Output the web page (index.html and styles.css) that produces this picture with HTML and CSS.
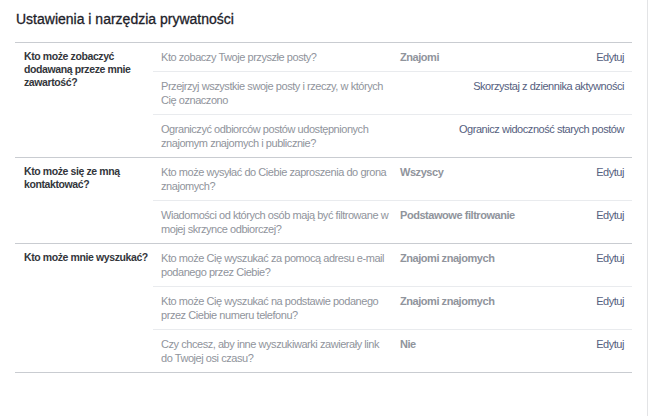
FILE: index.html
```html
<!DOCTYPE html>
<html lang="pl">
<head>
    <meta charset="UTF-8">
    <title>Ustawienia i narzędzia prywatności</title>
    <link rel="stylesheet" href="styles.css">
</head>
<body>
    <div class="panel">
        <h2 class="panel-title">Ustawienia i narzędzia prywatności</h2>

        <div class="section">
            <div class="section-label">Kto może zobaczyć dodawaną przeze mnie zawartość?</div>
            <div class="section-rows">
                <div class="row">
                    <div class="question">Kto zobaczy Twoje przyszłe posty?</div>
                    <div class="value">Znajomi</div>
                    <a class="action" href="#">Edytuj</a>
                </div>
                <div class="row">
                    <div class="question">Przejrzyj wszystkie swoje posty i rzeczy, w których Cię oznaczono</div>
                    <a class="action" href="#">Skorzystaj z dziennika aktywności</a>
                </div>
                <div class="row">
                    <div class="question">Ograniczyć odbiorców postów udostępnionych znajomym znajomych i publicznie?</div>
                    <a class="action" href="#">Ogranicz widoczność starych postów</a>
                </div>
            </div>
        </div>

        <div class="section">
            <div class="section-label">Kto może się ze mną kontaktować?</div>
            <div class="section-rows">
                <div class="row">
                    <div class="question">Kto może wysyłać do Ciebie zaproszenia do grona znajomych?</div>
                    <div class="value">Wszyscy</div>
                    <a class="action" href="#">Edytuj</a>
                </div>
                <div class="row">
                    <div class="question">Wiadomości od których osób mają być filtrowane w mojej skrzynce odbiorczej?</div>
                    <div class="value">Podstawowe filtrowanie</div>
                    <a class="action" href="#">Edytuj</a>
                </div>
            </div>
        </div>

        <div class="section last">
            <div class="section-label">Kto może mnie wyszukać?</div>
            <div class="section-rows">
                <div class="row">
                    <div class="question">Kto może Cię wyszukać za pomocą adresu e-mail podanego przez Ciebie?</div>
                    <div class="value">Znajomi znajomych</div>
                    <a class="action" href="#">Edytuj</a>
                </div>
                <div class="row">
                    <div class="question">Kto może Cię wyszukać na podstawie podanego przez Ciebie numeru telefonu?</div>
                    <div class="value">Znajomi znajomych</div>
                    <a class="action" href="#">Edytuj</a>
                </div>
                <div class="row">
                    <div class="question">Czy chcesz, aby inne wyszukiwarki zawierały link do Twojej osi czasu?</div>
                    <div class="value">Nie</div>
                    <a class="action" href="#">Edytuj</a>
                </div>
            </div>
        </div>
    </div>
</body>
</html>
```

FILE: styles.css
```css
/* Privacy settings panel */
:root {
    --title-color: #1d2129;
    --label-color: #33363b;
    --muted-color: #90949c;
    --link-color: #55607e;
    --section-line: #c9ccd1;
    --row-line: #e9ebee;
}

html, body {
    margin: 0;
    padding: 0;
    background: #fff;
    font-family: "Liberation Sans", Arial, sans-serif;
    font-size: 11px;
    letter-spacing: -0.45px;
}

.panel {
    width: 617px;
    min-height: 416px;
    padding: 0 15px;
    border-right: 1px solid #e3e4e6;
    box-sizing: content-box;
}

.panel-title {
    margin: 0;
    padding: 10px 1px 14px;
    font-size: 14px;
    line-height: 18px;
    font-weight: normal;
    letter-spacing: 0;
    color: var(--title-color);
    -webkit-text-stroke: 0.3px var(--title-color);
}

/* Sections */
.section {
    display: flex;
    border-top: 1px solid var(--section-line);
}

.section.last {
    border-bottom: 1px solid var(--section-line);
}

.section-label {
    flex: 0 0 129px;
    padding: 7px 0 7px 9px;
    font-size: 10.5px;
    font-weight: bold;
    line-height: 13px;
    letter-spacing: -0.4px;
    color: var(--label-color);
}

.section-rows {
    flex: 1;
}

.row {
    display: flex;
    align-items: flex-start;
    padding: 7px 8px;
    line-height: 14px;
}

.row + .row {
    border-top: 1px solid var(--row-line);
}

.question {
    flex: 0 0 231px;
    margin-right: 8px;
    color: var(--muted-color);
}

.value {
    flex: 1;
    font-weight: bold;
    color: var(--muted-color);
}

.action {
    margin-left: auto;
    color: var(--link-color);
    text-decoration: none;
    white-space: nowrap;
}
```
